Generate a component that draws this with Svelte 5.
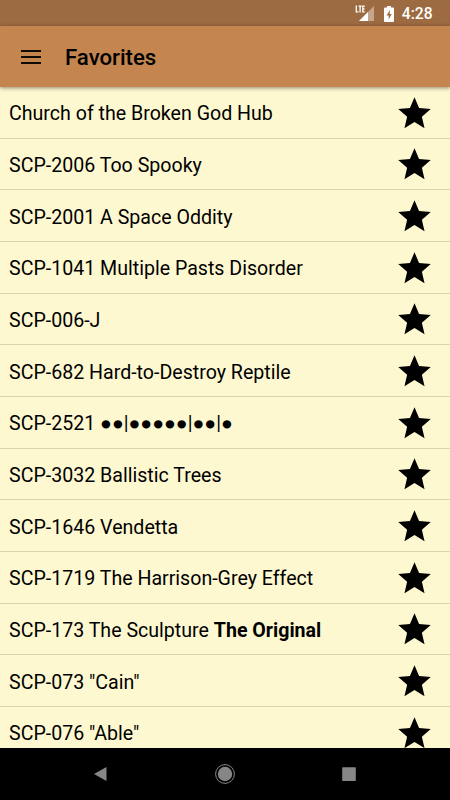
<script lang="ts">
	interface Favorite {
		title: string;
		note?: string;
	}

	const favorites: Favorite[] = [
		{ title: 'Church of the Broken God Hub' },
		{ title: 'SCP-2006 Too Spooky' },
		{ title: 'SCP-2001 A Space Oddity' },
		{ title: 'SCP-1041 Multiple Pasts Disorder' },
		{ title: 'SCP-006-J' },
		{ title: 'SCP-682 Hard-to-Destroy Reptile' },
		{ title: 'SCP-2521 ●●|●●●●●|●●|●' },
		{ title: 'SCP-3032 Ballistic Trees' },
		{ title: 'SCP-1646 Vendetta' },
		{ title: 'SCP-1719 The Harrison-Grey Effect' },
		{ title: 'SCP-173 The Sculpture', note: 'The Original' },
		{ title: 'SCP-073 "Cain"' },
		{ title: 'SCP-076 "Able"' }
	];
</script>

<div class="screen">
	<div class="status-bar">
		<svg class="signal" viewBox="0 0 20 17" aria-hidden="true">
			<path d="M19 1v15H4z" fill="#fff" opacity=".4" />
			<path d="M13 7v9H4z" fill="#fff" />
			<path d="M1.300 .5v6.400h2.200M3.500 1.100h3.200M5.100 1.100V7.400M9.800 1.100H7.800V6.900h2M7.800 4h1.700" fill="none" stroke="#fff" stroke-width="1.300" />
		</svg>
		<svg class="battery" viewBox="0 0 10 16" aria-hidden="true">
			<path fill="#fff" fill-rule="evenodd" d="M3 0h4v1.600h2q1 0 1 1V15q0 1-1 1H1q-1 0-1-1V2.600q0-1 1-1h2zM6 4L2.500 9.500h2.200V13.500L7.700 8H5.700z" />
		</svg>
		<span class="time">4:28</span>
	</div>

	<header class="toolbar">
		<button class="menu" aria-label="Menu">
			<svg viewBox="0 0 20 14" aria-hidden="true">
				<path d="M0 1h20M0 7h20M0 13h20" stroke="#100b06" stroke-width="2" />
			</svg>
		</button>
		<h1>Favorites</h1>
	</header>

	<ul class="list">
		{#each favorites as favorite}
			<li class="row">
				<span class="title">
					{favorite.title}
					{#if favorite.note}<b>{favorite.note}</b>{/if}
				</span>
				<svg class="star" viewBox="0 0 24 24" aria-hidden="true">
					<path d="M12 17.270L18.180 21l-1.640-7.030L22 9.240l-7.190-.61L12 2 9.190 8.630 2 9.240l5.460 4.730L5.820 21z" />
				</svg>
			</li>
		{/each}
	</ul>

	<nav class="nav-bar">
		<svg viewBox="0 0 24 24" aria-label="Back">
			<path d="M17.500 5v14L5 12z" />
		</svg>
		<svg viewBox="0 0 24 24" aria-label="Home">
			<circle cx="12" cy="12" r="7.200" />
			<circle class="ring" cx="12" cy="12" r="9.400" />
		</svg>
		<svg viewBox="0 0 24 24" aria-label="Recent apps">
			<rect x="5.200" y="5.200" width="13.600" height="13.800" rx=".6" />
		</svg>
	</nav>
</div>

<style>
	.screen {
		display: flex;
		flex-direction: column;
		width: 450px;
		height: 800px;
		overflow: hidden;
		background: #fef8d0;
		color: #000;
		font-family: Roboto, sans-serif;
	}

	.status-bar {
		display: flex;
		flex: none;
		align-items: center;
		justify-content: flex-end;
		box-sizing: border-box;
		height: 26px;
		padding: 1px 17.500px 0 0;
		background: #9d6b41;
		color: #fff;
	}

	.signal {
		width: 20px;
		height: 17px;
		margin-bottom: 1px;
	}

	.battery {
		width: 10px;
		height: 16px;
		margin: 0 8px 0 9px;
	}

	.time {
		font-size: 15.600px;
		font-weight: 500;
		line-height: 24px;
		padding-top: 1px;
	}

	.toolbar {
		display: flex;
		flex: none;
		align-items: center;
		height: 61px;
		padding-left: 21px;
		background: #c4854f;
		box-shadow: 0 1px 4px rgba(0, 0, 0, 0.45);
		z-index: 1;
	}

	.menu {
		display: flex;
		padding: 0;
		border: 0;
		background: none;
	}

	.menu svg {
		width: 20px;
		height: 14px;
	}

	h1 {
		margin: 0 0 0 24px;
		font-size: 22.200px;
		font-weight: 500;
		line-height: 26px;
	}

	.list {
		flex: 1;
		min-height: 0;
		margin: 0;
		padding: 0;
		overflow: hidden;
		list-style: none;
	}

	.row {
		display: flex;
		align-items: center;
		justify-content: space-between;
		box-sizing: border-box;
		height: 51.670px;
		padding: 2px 16.500px 0 9px;
		border-bottom: 1px solid #d9d3b1;
	}

	.title {
		padding-top: 2px;
		font-size: 19.600px;
		line-height: 24px;
		white-space: nowrap;
	}

	.star {
		width: 39px;
		height: 39px;
	}

	.nav-bar {
		display: flex;
		flex: none;
		align-items: center;
		justify-content: space-between;
		height: 52px;
		padding: 0 89px;
		background: #000;
	}

	.nav-bar svg {
		width: 24px;
		height: 24px;
		fill: #868686;
	}

	.nav-bar .ring {
		fill: none;
		stroke: #868686;
		stroke-width: 1;
	}
</style>
